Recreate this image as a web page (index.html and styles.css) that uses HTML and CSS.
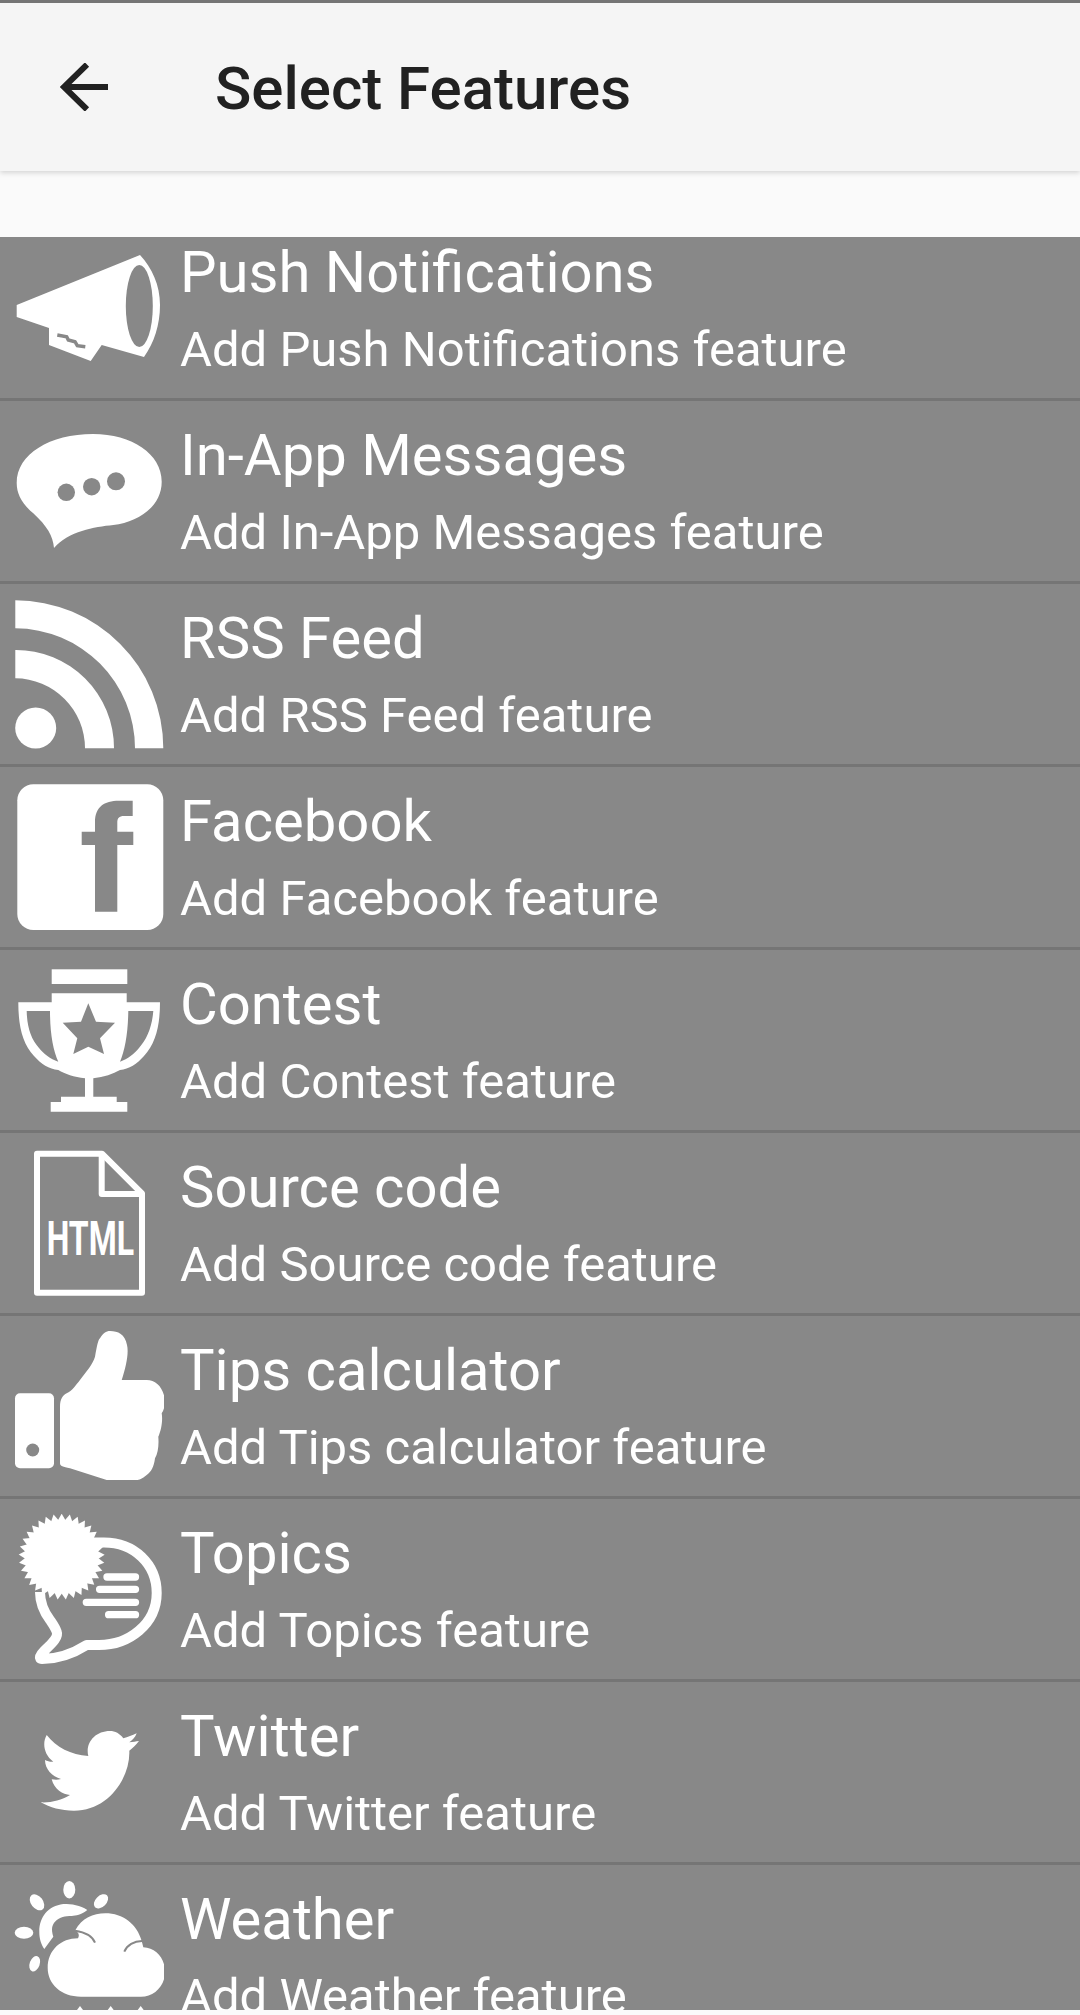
FILE: index.html
```html
<!DOCTYPE html>
<html lang="en">
<head>
    <meta charset="UTF-8">
    <meta name="viewport" content="width=device-width, initial-scale=1.0">
    <title>Select Features</title>
    <link rel="stylesheet" href="styles.css">
</head>
<body>
    <header class="toolbar">
        <svg class="back" viewBox="0 0 48 48"><path d="M48 24H3M27 1.5L4 24l23 22.5"/></svg>
        <h1>Select Features</h1>
    </header>
    <main class="list">
        <ul class="rows">
            <li class="row">
                <svg class="icon" viewBox="0 0 150 150">
                    <path d="M2.7 72L126 22C138 35 146 52 146 72C146 92 140 110 130 124L87.7 112L76.7 128L35 112V95L2.7 84Z"/>
                    <ellipse class="cut" cx="125.3" cy="73" rx="13.5" ry="41"/>
                    <path class="cut-line" stroke-width="3.5" d="M43.3 102L52.7 103.7L54.3 107L61 108.7L63.3 112.7L71.3 113.7"/>
                </svg>
                <div class="text"><h2>Push Notifications</h2><p>Add Push Notifications feature</p></div>
            </li>
            <li class="row">
                <svg class="icon" viewBox="0 0 150 150">
                    <path d="M2.7 67C2.7 38 36 18 79 18C118 18 147.7 38 147.7 65.7C147.7 90 125 106 99.3 109C80 111 55 115 40 132C39 120 33 110 19.3 97.3C8 88 2.7 78 2.7 67Z"/>
                    <circle class="cut" cx="52.3" cy="76.3" r="8.7"/>
                    <circle class="cut" cx="77.7" cy="70.7" r="8.7"/>
                    <circle class="cut" cx="102" cy="65.3" r="9"/>
                </svg>
                <div class="text"><h2>In-App Messages</h2><p>Add In-App Messages feature</p></div>
            </li>
            <li class="row">
                <svg class="icon" viewBox="0 0 150 150">
                    <path d="M1.3 1.3A148 148 0 0 1 149.3 149.3H121A120 120 0 0 0 1.3 29.3Z"/>
                    <path d="M1.3 51A98 98 0 0 1 100 149.3H71A70 70 0 0 0 1.3 79.3Z"/>
                    <circle cx="21.7" cy="129" r="20.5"/>
                </svg>
                <div class="text"><h2>RSS Feed</h2><p>Add RSS Feed feature</p></div>
            </li>
            <li class="row">
                <svg class="icon" viewBox="0 0 150 150">
                    <rect x="3.3" y="2.3" width="146" height="145.7" rx="16"/>
                    <path class="cut" d="M81 129.7V63H67.7V49.7H81V40C81 25 90 18.7 105 18.7H118.7V34H110C105 34 103.3 36 103.3 41V49.7H119.3V63H103.3V129.7Z"/>
                </svg>
                <div class="text"><h2>Facebook</h2><p>Add Facebook feature</p></div>
            </li>
            <li class="row">
                <svg class="icon" viewBox="0 0 150 150">
                    <rect x="37.7" y="4.3" width="75.6" height="14.7"/>
                    <path fill-rule="evenodd" d="M37.7 28.3H112.7V37.3H146C146 60 142 78 130 91C123 99 115 104 106 105C99 109 90 112 79.3 113.3V131.7H102.7V137H113.3V146.7H36.7V137H47V131.7H71V113.3C60 112 51 109 44.3 105C35 104 27 99 20 91C8 78 4.3 60 4.3 37.3H37.7ZM12.7 46C13 62 17 74 25 83C30 89 36 94 44.3 96.7C39 85 36 68 36 46ZM114.3 46C114 68 111 85 106 96.7C114 94 120 89 125 83C133 74 138 62 139.3 46ZM74.3 38.3L67 56.7L48.7 57.7L63.3 73.3L59.3 89L74.3 81.7L90 89L86 73.3L101 57.7L82 56.7Z"/>
                </svg>
                <div class="text"><h2>Contest</h2><p>Add Contest feature</p></div>
            </li>
            <li class="row">
                <svg class="icon" viewBox="0 0 150 150">
                    <path class="outline" stroke-width="6" d="M23 5.7H88L128 45.5V144.7H23Z"/>
                    <path class="outline" stroke-width="6" d="M87.7 5.7V46H128"/>
                    <text class="html-label" x="32.7" y="107" textLength="87.3" lengthAdjust="spacingAndGlyphs">HTML</text>
                </svg>
                <div class="text"><h2>Source code</h2><p>Add Source code feature</p></div>
            </li>
            <li class="row">
                <svg class="icon" viewBox="0 0 150 150">
                    <rect x="1" y="62.3" width="39" height="75" rx="5"/>
                    <circle class="cut" cx="18.7" cy="119" r="6.5"/>
                    <path d="M46 75.7C46 68 49 64 52.7 62.3C58 60 62 54 66 49C72 41 79 33 81 25.7C83 15 84 9 86 7.3C89 2 92 0 96 0C104 0 111 3 113 14C115 22 112 36 107.7 49H132.7C142 49 149 56 151 69C151 74 150 79 147.7 82.3C149 90 147 100 144.3 105.7C145 114 144 122 141 127.3C140 136 137 141 132.7 144C128 148 125 149 122.7 149H92.7L56 137.3C49 136 46 135 46 132.3Z"/>
                </svg>
                <div class="text"><h2>Tips calculator</h2><p>Add Tips calculator feature</p></div>
            </li>
            <li class="row">
                <svg class="icon" viewBox="0 0 150 150">
                    <path class="outline" stroke-width="10" d="M60 28.5H90C120 28.5 142.7 50 142.7 79C142.7 110 115 131 85 131H72.7C60 139 45 145 28 145C24 145 26 141 30 137C36 131 45 124 42.7 117.7C41 113 38 109 36 106C30 98 26 90 26 78"/>
                    <g>
                        <polygon points="47.7,-0.3 85,64.2 10.4,64.2"/>
                        <polygon points="47.7,-0.3 85,64.2 10.4,64.2" transform="rotate(10.91 47.7 42.7)"/>
                        <polygon points="47.7,-0.3 85,64.2 10.4,64.2" transform="rotate(21.82 47.7 42.7)"/>
                        <polygon points="47.7,-0.3 85,64.2 10.4,64.2" transform="rotate(32.73 47.7 42.7)"/>
                        <polygon points="47.7,-0.3 85,64.2 10.4,64.2" transform="rotate(43.64 47.7 42.7)"/>
                        <polygon points="47.7,-0.3 85,64.2 10.4,64.2" transform="rotate(54.55 47.7 42.7)"/>
                        <polygon points="47.7,-0.3 85,64.2 10.4,64.2" transform="rotate(65.45 47.7 42.7)"/>
                        <polygon points="47.7,-0.3 85,64.2 10.4,64.2" transform="rotate(76.36 47.7 42.7)"/>
                        <polygon points="47.7,-0.3 85,64.2 10.4,64.2" transform="rotate(87.27 47.7 42.7)"/>
                        <polygon points="47.7,-0.3 85,64.2 10.4,64.2" transform="rotate(98.18 47.7 42.7)"/>
                        <polygon points="47.7,-0.3 85,64.2 10.4,64.2" transform="rotate(109.09 47.7 42.7)"/>
                    </g>
                    <path class="bars" stroke-width="7.3" d="M93 63H121.5M85.6 75.3H121.5M72.3 88.3H121.5M94.6 100.7H121.5"/>
                </svg>
                <div class="text"><h2>Topics</h2><p>Add Topics feature</p></div>
            </li>
            <li class="row">
                <svg class="icon" viewBox="0 0 150 150">
                    <path d="M26.7 105.3C36 106 47 103.5 56 98C49 97.8 40 92 37.7 82.3C41 83 44 83 47 82C38 79.5 31 72 31 63C33.5 64.3 36.5 65 39.3 64.7C30 58 28 46 32.7 38C42 50 57 58 74.3 59C71 46 81 34 96 34C101 34 106 36.5 109.3 41.3C114 40 118 38.5 122.7 36.3C121 40.5 118.5 43.3 115.3 45.3C119 45 122 44.3 125 44C122 48 119 51 115.3 53.7C116.5 80 95 113.7 60 113.7C47 113.7 36 110.5 26.7 105.3Z"/>
                </svg>
                <div class="text"><h2>Twitter</h2><p>Add Twitter feature</p></div>
            </li>
            <li class="row">
                <svg class="icon" viewBox="0 0 150 150">
                    <ellipse cx="55.3" cy="9.7" rx="6" ry="8.7"/>
                    <ellipse cx="23" cy="22.3" rx="6" ry="9" transform="rotate(-38 23 22.3)"/>
                    <ellipse cx="87" cy="21.3" rx="5.5" ry="8.5" transform="rotate(45 87 21.3)"/>
                    <ellipse cx="10" cy="52.7" rx="9.3" ry="6"/>
                    <ellipse cx="20.7" cy="83.7" rx="5" ry="8" transform="rotate(20 20.7 83.7)"/>
                    <path d="M73.3 30C66 25 58 24 49.3 24C34 26 25.3 37 25.3 51.7C25.3 59 27 64 30.3 69L39.3 56.7C37 49 38 45 41 41.7C46 37 51 36 57.7 36C62 35.5 67 35 73.3 30Z"/>
                    <path d="M61 50.7C68 38 79 33.3 91.3 33.3C109 33.3 123 44 127.7 61L129.3 67.3C142 68 151 78 151 92C151 106 140 116.7 127 116.7H67C47 116.7 33.7 104 33.7 88C33.7 70 47 58.3 64 58.3C66 54 64 52 61 50.7Z"/>
                    <path class="cut-line" stroke-width="2" d="M61 50.7C70 52 78 55 81 62.7M110.3 71.7C113 65 120 61 128 61"/>
                    <path d="M66 126L60 134H72ZM96.7 126L90.7 134H102.7ZM126.7 126L120.7 134H132.7Z"/>
                </svg>
                <div class="text"><h2>Weather</h2><p>Add Weather feature</p></div>
            </li>
        </ul>
    </main>
</body>
</html>
```

FILE: styles.css
```css
body {
    margin: 0;
    height: 2015px;
    overflow: hidden;
    background-color: #fafafa;
    font-family: Roboto, Arial, sans-serif;
}

.toolbar {
    display: flex;
    align-items: center;
    height: 168px;
    padding-left: 60px;
    background-color: #f5f5f5;
    border-top: 3px solid #757575;
    box-shadow: 0 2px 5px rgba(0, 0, 0, 0.15);
}

.back {
    width: 48px;
    height: 48px;
    fill: none;
    stroke: #212121;
    stroke-width: 6;
}

.toolbar h1 {
    margin: 2px 0 0 107px;
    font-size: 60px;
    font-weight: 500;
    color: #212121;
}

.list {
    height: 1773px;
    margin-top: 66px;
    overflow: hidden;
}

.rows {
    list-style: none;
    margin: -19px 0 0;
    padding: 0;
}

.row {
    display: flex;
    height: 180px;
    background-color: #888888;
    border-bottom: 3px solid #757575;
}

.icon {
    flex: none;
    width: 150px;
    height: 150px;
    margin: 15px 0 0 14px;
    fill: #fff;
}

.icon .cut {
    fill: #888888;
}

.icon .cut-line {
    fill: none;
    stroke: #888888;
}

.icon .outline {
    fill: none;
    stroke: #fff;
    stroke-linejoin: round;
}

.icon .bars {
    fill: none;
    stroke: #fff;
    stroke-linecap: round;
}

.html-label {
    font-family: Roboto, sans-serif;
    font-size: 48px;
    font-weight: 700;
}

.text {
    padding: 19px 0 0 16px;
    color: #fff;
}

.text h2 {
    margin: 0;
    font-size: 58px;
    font-weight: 400;
    line-height: 70px;
}

.text p {
    margin: 8px 0 0;
    font-size: 49px;
    font-weight: 400;
    line-height: 70px;
}
```
